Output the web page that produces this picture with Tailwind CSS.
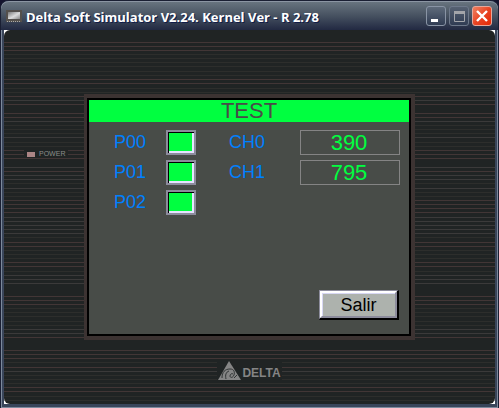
<!DOCTYPE html>
<html lang="es">
<head>
<meta charset="utf-8">
<meta name="viewport" content="width=device-width, initial-scale=1">
<title>Delta Soft Simulator</title>
<script src="https://cdn.jsdelivr.net/npm/@tailwindcss/browser@4"></script>
</head>
<body class="bg-[#14142e]">
<div class="flex min-h-screen flex-col rounded-t-lg border border-[#1a1f33] bg-[#39455a] px-[3px] pb-1 font-['Liberation_Sans',Arial,sans-serif] shadow-[inset_1px_0_0_#7d8a9c,inset_-1px_-1px_0_#7d8a9c]">
  <header class="-mx-[3px] flex h-[29px] shrink-0 items-center rounded-t-lg border-t border-[#8b95a3] bg-linear-to-b from-[#68747f] via-[#465160] via-50% to-[#222942] pr-[6px] pl-[5px]">
    <svg class="h-3 w-4 shrink-0" viewBox="0 0 16 12" aria-hidden="true">
      <defs><linearGradient id="scr" x2="1" y2="1"><stop stop-color="#777"/><stop offset=".55" stop-color="#ddd"/><stop offset="1" stop-color="#888"/></linearGradient></defs>
      <rect width="16" height="12" fill="#54504c"/><rect x="2" y="2" width="12" height="7" fill="url(#scr)"/>
      <path d="M1 11.500H15" stroke="#aaa" stroke-dasharray="1 1"/>
    </svg>
    <h1 class="min-w-0 flex-1 pt-px pl-1 font-['Open_Sans','Noto_Sans',sans-serif] text-[13px] leading-4 font-bold whitespace-nowrap text-white [text-shadow:1px_1px_0_#101c48]">Delta Soft Simulator V2.24. Kernel Ver - R 2.78</h1>
    <div class="flex gap-[3px]">
      <button type="button" aria-label="Minimize" class="size-5 rounded-[3px] border border-[#8994a5] bg-linear-to-b from-[#5f6b7b] to-[#303c53]"><svg viewBox="0 0 18 18" class="size-full"><path d="M4 12H11V15H4Z" fill="#fff"/></svg></button>
      <button type="button" aria-label="Maximize" class="size-5 rounded-[3px] border border-[#6d788a] bg-linear-to-b from-[#566172] to-[#303c53]"><svg viewBox="0 0 18 18" class="size-full"><path d="M4.500 5V14.500H14.500V5M4 5H15" fill="none" stroke="#a3a5aa"/><path d="M4 4H15V7H4Z" fill="#a3a5aa"/></svg></button>
      <button type="button" aria-label="Close" class="size-5 rounded-[3px] border border-[#e5a79b] bg-linear-to-br from-[#ee8060] via-[#e84423] to-[#e62500]"><svg viewBox="0 0 18 18" class="size-full"><path d="M4 4L14 14M14 4L4 14" stroke="#fff" stroke-width="2.400"/></svg></button>
    </div>
  </header>

  <main class="relative isolate flex flex-1 flex-col overflow-hidden bg-white">
    <div class="absolute inset-0 -z-10 overflow-hidden rounded-md bg-[#202424]">
      <svg class="size-full" aria-hidden="true" fill="none">
        <path stroke="#423636" d="M0 12.500h4000M0 16.500h4000M0 20.500h4000M0 49.500h4000M0 53.500h4000M0 66.500h4000M0 74.500h4000M0 83.500h4000M0 87.500h4000M0 120.500h4000M0 124.500h4000M0 128.500h4000M0 141.500h4000M0 170.500h4000M0 174.500h4000M0 178.500h4000M0 182.500h4000M0 212.500h4000M0 216.500h4000M0 232.500h4000M0 236.500h4000M0 266.500h4000M0 270.500h4000M0 274.500h4000M0 307.500h4000M0 320.500h4000M0 324.500h4000M0 328.500h4000M0 337.500h4000M0 357.500h4000M0 361.500h4000"/>
        <path stroke="#3b3a3a" d="M0 70.500h4000M0 91.500h4000M0 107.500h4000M0 137.500h4000M0 145.500h4000M0 149.500h4000M0 158.500h4000M0 187.500h4000M0 191.500h4000M0 195.500h4000M0 199.500h4000M0 203.500h4000M0 245.500h4000M0 249.500h4000M0 253.500h4000M0 299.500h4000M0 303.500h4000M0 341.500h4000"/>
        <path stroke="#2d2e2c" d="M0 24.500h4000M0 28.500h4000M0 32.500h4000M0 36.500h4000M0 41.500h4000M0 45.500h4000M0 58.500h4000M0 62.500h4000M0 95.500h4000M0 99.500h4000M0 103.500h4000M0 112.500h4000M0 116.500h4000M0 153.500h4000M0 162.500h4000M0 166.500h4000M0 207.500h4000M0 220.500h4000M0 224.500h4000M0 228.500h4000M0 241.500h4000M0 278.500h4000M0 282.500h4000M0 286.500h4000M0 291.500h4000M0 295.500h4000M0 332.500h4000M0 345.500h4000M0 349.500h4000M0 353.500h4000M0 366.500h4000M0 370.500h4000"/>
      </svg>
    </div>

    <div class="grid grid-cols-[80px_minmax(0,1fr)_80px] pt-16">
      <div class="pt-14 pl-5">
        <div class="flex h-2 w-11 items-center gap-1 bg-[#202424] pl-[3px]">
          <span class="h-[5px] w-2 shrink-0 bg-[#ab8585]"></span>
          <span class="text-[7px] leading-2 text-[#8a8c8a]">POWER</span>
        </div>
      </div>

      <section class="border-4 border-l-[3px] border-[#3c3332] bg-black p-px">
        <div class="flex flex-col border border-black bg-[#484c48]">
          <h2 class="bg-[#00ff40] text-center text-[22px] leading-[22px] text-[#484c48]">TEST</h2>
          <div class="flex items-start pt-2 pr-[9px] pl-[10px]">
            <div class="grid grid-cols-[52px_30px] gap-y-[5px] pl-[15px] text-[18px] leading-[25px] text-[#0080ff]">
              <label for="p00">P00</label>
              <button id="p00" type="button" class="h-[25px] border-2 border-[#8c8c9c] bg-black pt-px pl-px"><span class="block size-full border-r-2 border-b-2 border-[#e4e4ff] bg-[#00ff40]"></span></button>
              <label for="p01">P01</label>
              <button id="p01" type="button" class="h-[25px] border-2 border-[#8c8c9c] bg-black pt-px pl-px"><span class="block size-full border-r-2 border-b-2 border-[#e4e4ff] bg-[#00ff40]"></span></button>
              <label for="p02">P02</label>
              <button id="p02" type="button" class="h-[25px] border-2 border-[#8c8c9c] bg-black pt-px pl-px"><span class="block size-full border-r-2 border-b-2 border-[#e4e4ff] bg-[#00ff40]"></span></button>
            </div>
            <div class="ml-[33px] grid flex-1 grid-cols-[71px_minmax(0,1fr)] gap-y-[5px] text-[18px] leading-[25px] text-[#0080ff]">
              <label for="ch0">CH0</label>
              <input id="ch0" readonly value="390" class="h-[25px] w-full border border-[#848484] pr-0.5 text-center text-[22px] leading-[22px] text-[#00ff40]">
              <label for="ch1">CH1</label>
              <input id="ch1" readonly value="795" class="h-[25px] w-full border border-[#848484] pr-0.5 text-center text-[22px] leading-[22px] text-[#00ff40]">
            </div>
          </div>
          <div class="flex justify-end px-[10px] pt-[75px] pb-[14px]">
            <button type="button" class="h-[30px] w-20 border-t border-r-2 border-b-2 border-l border-t-[#8c8c9c] border-r-black border-b-black border-l-[#8c8c9c] bg-[#adb2ad] text-[18px] text-black"><span class="flex size-full items-center justify-center border-2 border-t-white border-r-[#8c8c9c] border-b-[#8c8c9c] border-l-white pt-px shadow-[inset_1px_1px_0_#d8d8f4]">Salir</span></button>
          </div>
        </div>
      </section>
    </div>

    <div class="flex justify-center pt-5 pb-6">
      <div class="flex h-5 items-end bg-[#202424] text-[#858585]">
        <svg class="h-[19px] w-[25px]" viewBox="0 0 25 19" aria-hidden="true">
          <path d="M12 0L24 19H1Z" fill="currentColor"/>
          <path d="M5 17C5 11 8 8 13 8C17 8 18 11 17 14C16 17 13 17 13 15C13 13 15 12 16 13M9 18C8 14 9 11 12 10M17 17L20 14" fill="none" stroke="#303434"/>
        </svg>
        <span class="pr-px text-[12px] leading-[14px] font-bold">DELTA</span>
      </div>
    </div>
  </main>
</div>
</body>
</html>
